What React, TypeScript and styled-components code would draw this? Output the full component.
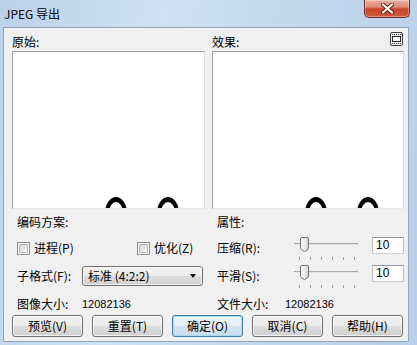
import React from "react";
import styled, { createGlobalStyle } from "styled-components";

const FONT = `"Noto Sans CJK SC", "Microsoft YaHei", sans-serif`;

const Global = createGlobalStyle`
  html, body { margin: 0; padding: 0; width: 417px; height: 345px; overflow: hidden; background: #bcd3ec; }
  #root { width: 417px; height: 345px; }
  * { box-sizing: border-box; }
`;

const Window = styled.div`
  width: 417px;
  height: 345px;
  display: flex;
  flex-direction: column;
  background: linear-gradient(100deg, #bcd2ea 0%, #cfe0f3 35%, #c4d8ee 60%, #b9d0ea 100%);
  font-family: ${FONT};
  font-size: 12px;
  color: #000;
`;

const TitleBar = styled.div`
  height: 27px;
  flex: none;
  display: flex;
  align-items: center;
  padding: 0 7px 0 4px;
`;

const Title = styled.div`
  flex: 1;
  font-size: 12px;
  line-height: 14px;
  color: #000;
`;

const CloseButton = styled.div`
  align-self: flex-start;
  width: 46px;
  height: 18px;
  border: 1px solid #6e2b20;
  border-top: none;
  border-radius: 0 0 5px 5px;
  background: linear-gradient(180deg, #eab0a2 0%, #de8c79 40%, #c8432a 52%, #d15a3c 100%);
  box-shadow: inset 0 0 0 1px rgba(255, 255, 255, 0.35);
  display: flex;
  align-items: center;
  justify-content: center;
`;

const Client = styled.div`
  flex: 1;
  margin: 0 8px 3px 3px;
  background: #f0f0f0;
  border: 1px solid #90a5be;
  display: flex;
  flex-direction: column;
  padding: 4px 4px 0 8px;
`;

const TwoColumns = styled.div`
  display: grid;
  grid-template-columns: 193px 192px;
  column-gap: 7px;
`;

const PreviewColumn = styled.div`
  display: flex;
  flex-direction: column;
`;

const PanelHeader = styled.div`
  height: 18px;
  display: flex;
  justify-content: space-between;
  align-items: flex-end;
`;

const Label = styled.span`
  line-height: 16px;
  white-space: nowrap;
`;

const HeaderIcon = styled.svg`
  align-self: flex-start;
  margin-right: 1px;
`;

const PreviewBox = styled.div`
  margin-top: 1px;
  height: 158px;
  background: #fff;
  border: 1px solid;
  border-color: #a0a0a0 #dcdcdc #e8e8e8 #a0a0a0;
  display: flex;
  align-items: flex-end;
  padding-left: 92px;
  gap: 30px;
  overflow: hidden;
`;

const Ring = styled.div`
  flex: none;
  width: 22px;
  height: 32px;
  border: 4px solid #000;
  border-top-width: 5px;
  border-radius: 50%;
  margin-bottom: -21px;
`;

const SettingsGrid = styled.div`
  margin-top: 4px;
  display: grid;
  grid-template-columns: 193px 192px;
  grid-template-rows: 17px 20px 20px 20px;
  column-gap: 7px;
  row-gap: 8px;
`;

const Cell = styled.div`
  display: flex;
  align-items: center;
  padding-left: 5px;
  min-width: 0;
`;

const FieldLabel = styled.span<{ $w: number }>`
  flex: none;
  width: ${(p) => p.$w}px;
  line-height: 16px;
  white-space: nowrap;
`;

const Value = styled.span`
  font-family: "Liberation Sans", Arial, sans-serif;
  font-size: 11px;
  line-height: 16px;
`;

const CheckItem = styled.label<{ $w?: number }>`
  display: flex;
  align-items: center;
  gap: 4px;
  width: ${(p) => (p.$w ? `${p.$w}px` : "auto")};
  line-height: 16px;
`;

const CheckBox = styled.span`
  position: relative;
  flex: none;
  width: 13px;
  height: 13px;
  border: 1px solid #8e8f8f;
  background: #fff;
  &::after {
    content: "";
    position: absolute;
    inset: 1px;
    border: 1px solid #b6b9bd;
    background: linear-gradient(135deg, #cfd2d6 0%, #e9eaec 60%, #f8f8f8 100%);
  }
`;

const Select = styled.div`
  flex: none;
  width: 121px;
  height: 20px;
  display: flex;
  align-items: center;
  padding-left: 5px;
  border: 1px solid #707070;
  border-radius: 3px;
  background: linear-gradient(180deg, #f4f4f4 0%, #ebebeb 50%, #dddddd 51%, #d0d0d0 100%);
  box-shadow: inset 0 0 0 1px rgba(255, 255, 255, 0.7);
  line-height: 16px;
`;

const SelectArrow = styled.span`
  margin-left: auto;
  margin-right: 6px;
  width: 0;
  height: 0;
  border-left: 3.5px solid transparent;
  border-right: 3.5px solid transparent;
  border-top: 4px solid #000;
`;

const SliderSvg = styled.svg`
  flex: none;
  align-self: flex-start;
  margin-top: -1px;
  overflow: visible;
`;

const EditBox = styled.div`
  flex: none;
  align-self: flex-start;
  margin-top: -1px;
  margin-left: auto;
  width: 32px;
  height: 17px;
  background: #fff;
  border: 1px solid;
  border-color: #8f959d #b9bec5 #c8ccd2 #b9bec5;
  padding-left: 3px;
  font-family: "Liberation Sans", Arial, sans-serif;
  font-size: 12px;
  line-height: 15px;
`;

const ButtonRow = styled.div`
  margin-top: 1px;
  display: flex;
  gap: 9px;
`;

const Button = styled.button<{ $default?: boolean }>`
  width: 71px;
  height: 22px;
  padding: 0;
  font-family: ${FONT};
  font-size: 12px;
  line-height: 16px;
  color: #000;
  border-radius: 3px;
  border: 1px solid ${(p) => (p.$default ? "#3c7fb1" : "#707070")};
  background: ${(p) =>
    p.$default
      ? "linear-gradient(180deg, #f0f6fb 0%, #e6eff7 50%, #d6e4f0 51%, #c9dbea 100%)"
      : "linear-gradient(180deg, #f3f3f3 0%, #ebebeb 50%, #dddddd 51%, #cfcfcf 100%)"};
  box-shadow: inset 0 0 0 1px ${(p) => (p.$default ? "#a7dcf7" : "rgba(255,255,255,0.75)")};
`;

const Slider: React.FC = () => {
  const ticks = [5, 16, 27, 38, 49, 60];
  return (
    <SliderSvg width="66" height="24" viewBox="0 0 66 24">
      <defs>
        <linearGradient id="thumbG" x1="0" y1="0" x2="1" y2="0">
          <stop offset="0" stopColor="#fafafa" />
          <stop offset="0.6" stopColor="#e8e8e8" />
          <stop offset="1" stopColor="#cfcfcf" />
        </linearGradient>
      </defs>
      <line x1="0" y1="6.5" x2="64" y2="6.5" stroke="#a7a7a7" />
      <line x1="1" y1="7.5" x2="64" y2="7.5" stroke="#e4e4e4" />
      {ticks.map((x) => (
        <line key={x} x1={x + 0.5} y1="20" x2={x + 0.5} y2="23" stroke="#9a9a9a" />
      ))}
      <path
        d="M6.5 2 Q6.5 0.5 8 0.5 H13 Q14.5 0.5 14.5 2 V11 Q14.5 13 10.5 14.5 Q6.5 13 6.5 11 Z"
        fill="url(#thumbG)"
        stroke="#707070"
      />
    </SliderSvg>
  );
};

const FitIcon: React.FC = () => (
  <HeaderIcon width="13" height="14" viewBox="0 0 13 14">
    <rect x="0.5" y="0.5" width="12" height="13" rx="1.5" fill="#e6ecf2" stroke="#3f3f3f" />
    <path d="M2 2.5h9M2 11.5h9" stroke="#3f3f3f" strokeDasharray="1 1" />
    <rect x="2.5" y="4.5" width="8" height="5" fill="#fafafa" stroke="#2a2a2a" />
  </HeaderIcon>
);

const CloseX: React.FC = () => (
  <svg width="13" height="11" viewBox="0 0 13 11">
    <path d="M2 1.5 L11 9.5 M11 1.5 L2 9.5" stroke="#5a1e14" strokeWidth="4" strokeLinecap="round" />
    <path d="M2 1.5 L11 9.5 M11 1.5 L2 9.5" stroke="#ffffff" strokeWidth="2.2" strokeLinecap="round" />
  </svg>
);

export default function App() {
  return (
    <>
      <Global />
      <Window>
        <TitleBar>
          <Title>JPEG 导出</Title>
          <CloseButton>
            <CloseX />
          </CloseButton>
        </TitleBar>
        <Client>
          <TwoColumns>
            <PreviewColumn>
              <PanelHeader>
                <Label>原始:</Label>
              </PanelHeader>
              <PreviewBox>
                <Ring />
                <Ring />
              </PreviewBox>
            </PreviewColumn>
            <PreviewColumn>
              <PanelHeader>
                <Label>效果:</Label>
                <FitIcon />
              </PanelHeader>
              <PreviewBox>
                <Ring />
                <Ring />
              </PreviewBox>
            </PreviewColumn>
          </TwoColumns>

          <SettingsGrid>
            <Cell>
              <Label>编码方案:</Label>
            </Cell>
            <Cell>
              <Label>属性:</Label>
            </Cell>

            <Cell>
              <CheckItem $w={120}>
                <CheckBox />
                <span>进程(P)</span>
              </CheckItem>
              <CheckItem>
                <CheckBox />
                <span>优化(Z)</span>
              </CheckItem>
            </Cell>
            <Cell>
              <FieldLabel $w={77}>压缩(R):</FieldLabel>
              <Slider />
              <EditBox>10</EditBox>
            </Cell>

            <Cell>
              <FieldLabel $w={65}>子格式(F):</FieldLabel>
              <Select>
                <span>标准 (4:2:2)</span>
                <SelectArrow />
              </Select>
            </Cell>
            <Cell>
              <FieldLabel $w={77}>平滑(S):</FieldLabel>
              <Slider />
              <EditBox>10</EditBox>
            </Cell>

            <Cell>
              <FieldLabel $w={65}>图像大小:</FieldLabel>
              <Value>12082136</Value>
            </Cell>
            <Cell>
              <FieldLabel $w={68}>文件大小:</FieldLabel>
              <Value>12082136</Value>
            </Cell>
          </SettingsGrid>

          <ButtonRow>
            <Button>预览(V)</Button>
            <Button>重置(T)</Button>
            <Button $default>确定(O)</Button>
            <Button>取消(C)</Button>
            <Button>帮助(H)</Button>
          </ButtonRow>
        </Client>
      </Window>
    </>
  );
}
